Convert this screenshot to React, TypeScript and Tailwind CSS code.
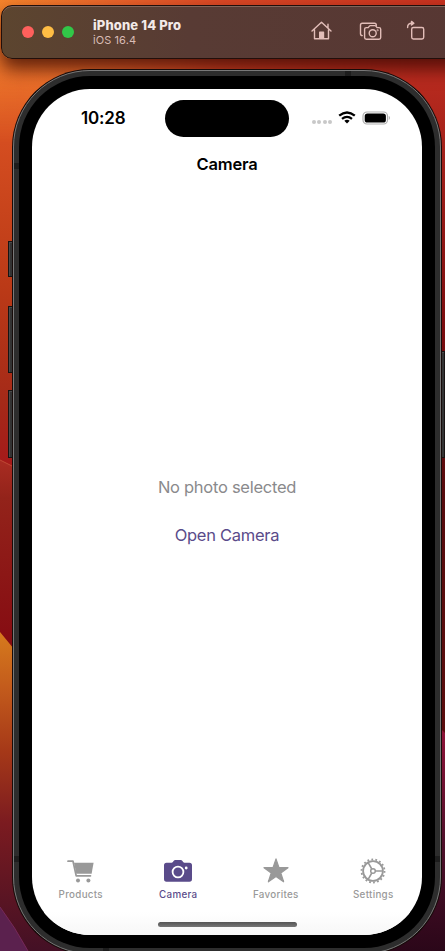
import React from "react";

function Wallpaper() {
  return (
    <svg className="absolute inset-0" width="445" height="951" viewBox="0 0 445 951" aria-hidden="true">
      <defs>
        <linearGradient id="top" x1="0" x2="1" y1="0" y2="0">
          <stop offset="0" stopColor="#f5842c" />
          <stop offset="0.25" stopColor="#e9652b" />
          <stop offset="0.5" stopColor="#da4825" />
          <stop offset="1" stopColor="#c8321f" />
        </linearGradient>
        <linearGradient id="left" gradientUnits="userSpaceOnUse" x1="0" x2="0" y1="0" y2="951">
          <stop offset="0" stopColor="#e9702b" stopOpacity="0" />
          <stop offset="0.07" stopColor="#e66a29" stopOpacity="0.6" />
          <stop offset="0.15" stopColor="#d44d20" />
          <stop offset="0.3" stopColor="#bb3a17" />
          <stop offset="0.42" stopColor="#a52a18" />
          <stop offset="0.5" stopColor="#a5171a" />
        </linearGradient>
        <linearGradient id="ridge" gradientUnits="userSpaceOnUse" x1="0" x2="0" y1="460" y2="650">
          <stop offset="0" stopColor="#a92c22" />
          <stop offset="0.2" stopColor="#93231a" />
          <stop offset="1" stopColor="#850b12" />
        </linearGradient>
        <linearGradient id="amber" gradientUnits="userSpaceOnUse" x1="0" x2="0" y1="630" y2="951">
          <stop offset="0" stopColor="#d77c1d" />
          <stop offset="0.18" stopColor="#c35b1c" />
          <stop offset="0.38" stopColor="#a53818" />
          <stop offset="0.6" stopColor="#7b1b20" />
          <stop offset="1" stopColor="#431025" />
        </linearGradient>
        <linearGradient id="right" gradientUnits="userSpaceOnUse" x1="0" x2="0" y1="50" y2="735">
          <stop offset="0" stopColor="#c02e20" />
          <stop offset="0.15" stopColor="#a3211a" />
          <stop offset="0.4" stopColor="#7c0c0e" />
          <stop offset="0.65" stopColor="#570a0c" />
          <stop offset="1" stopColor="#5a0c0c" />
        </linearGradient>
        <linearGradient id="plum" gradientUnits="userSpaceOnUse" x1="0" x2="0" y1="730" y2="951">
          <stop offset="0" stopColor="#8e1237" />
          <stop offset="0.5" stopColor="#50102b" />
          <stop offset="1" stopColor="#2b0719" />
        </linearGradient>
        <linearGradient id="fadeRight" gradientUnits="userSpaceOnUse" x1="20" x2="160" y1="0" y2="0">
          <stop offset="0" stopColor="#fff" />
          <stop offset="1" stopColor="#000" />
        </linearGradient>
        <linearGradient id="fadeLeft" gradientUnits="userSpaceOnUse" x1="180" x2="420" y1="0" y2="0">
          <stop offset="0" stopColor="#000" />
          <stop offset="1" stopColor="#fff" />
        </linearGradient>
        <mask id="leftMask" maskUnits="userSpaceOnUse" x="0" y="0" width="445" height="951">
          <rect width="445" height="951" fill="url(#fadeRight)" />
        </mask>
        <mask id="rightMask" maskUnits="userSpaceOnUse" x="0" y="0" width="445" height="951">
          <rect width="445" height="951" fill="url(#fadeLeft)" />
        </mask>
      </defs>
      <rect width="445" height="951" fill="url(#top)" />
      <path d="M0 0H160V470H0Z" fill="url(#left)" mask="url(#leftMask)" />
      <path d="M180 50H445V740H180Z" fill="url(#right)" mask="url(#rightMask)" />
      <path d="M0 460L30 475V680H0Z" fill="url(#ridge)" />
      <path d="M0 460L30 475" fill="none" stroke="#bf4a35" />
      <path d="M0 632L32 671H200V951H0Z" fill="url(#amber)" />
      <path d="M300 718H430L445 733V951H300Z" fill="url(#plum)" />
      <path d="M0 907Q15 927 28 951H0Z" fill="#5b214e" />
      <path d="M0 907Q15 927 28 951" fill="none" stroke="#762958" />
    </svg>
  );
}

function TitleBar() {
  return (
    <header className="relative ml-px mt-[5px] flex h-[54px] w-[470px] shrink-0 items-center rounded-[11px] border border-[#210f0b] bg-gradient-to-r from-[#5c452f] via-[#583b34] via-40% to-[#573733] shadow-[inset_0_1px_0_#80655a,0_10px_18px_rgba(50,5,0,0.75)]">
      <div className="ml-5 flex gap-2">
        <span className="size-3 rounded-full bg-[#ff605c]" />
        <span className="size-3 rounded-full bg-[#ffbd44]" />
        <span className="size-3 rounded-full bg-[#31c748]" />
      </div>
      <div className="ml-[19px] w-[218px] whitespace-nowrap pt-px">
        <div className="text-[13px] font-extrabold leading-[15px] tracking-[0.13px] text-[#f3eae8]">iPhone 14 Pro</div>
        <div className="text-[11px] leading-[14px] tracking-[0.08px] text-[#d9bcb5]">iOS 16.4</div>
      </div>
      <svg width="21" height="21" viewBox="0 0 21 21" fill="none" stroke="#e2bdb8" strokeWidth="1.4" strokeLinecap="round" strokeLinejoin="round" className="mb-[3px]" aria-label="Home">
        <path d="M1 11L10.5 2.2L20 11M3.5 9.5V18.7H17.5V9.5M17 8V4.3" />
        <path d="M8.7 18V12.2H12.5V18Z" fill="#e2bdb8" />
      </svg>
      <svg width="24" height="20" viewBox="0 0 24 20" fill="none" stroke="#e2bdb8" strokeWidth="1.4" strokeLinejoin="round" strokeLinecap="round" className="mb-0.5 ml-[27px]" aria-label="Screenshot">
        <path d="M3.3 14.6Q1.5 14.6 1.5 12.8V4Q1.5 2.2 3.3 2.2H15.5Q17.3 2.2 17.3 4V4.5" />
        <path d="M7.3 6.6H9.2L10.4 5.1Q10.8 4.6 11.4 4.6H15.9Q16.5 4.6 16.9 5.1L18.1 6.6H20Q21.7 6.6 21.7 8.3V16.5Q21.7 18.2 20 18.2H7.3Q5.6 18.2 5.6 16.5V8.3Q5.6 6.6 7.3 6.6Z" />
        <circle cx="13.7" cy="12.2" r="3.5" />
        <circle cx="18.6" cy="9.2" r="0.3" />
      </svg>
      <svg width="20" height="21" viewBox="0 0 20 21" fill="none" stroke="#e2bdb8" strokeWidth="1.4" strokeLinejoin="round" strokeLinecap="round" className="ml-[23px] mb-[3px]" aria-label="Rotate">
        <rect x="5.7" y="7.5" width="12" height="11.5" rx="1.7" />
        <path d="M1.6 7.6Q1.5 3.2 6 3.2" />
        <path d="M5.5 1.4L7.9 3.2L5.5 5Z" fill="#e2bdb8" />
      </svg>
    </header>
  );
}

function StatusBar() {
  return (
    <div className="flex h-[58px] pt-[11px]">
      <div className="w-[133px] pl-[49px] pt-[7px] text-[17px] font-semibold leading-[22px] tracking-[-0.15px]">10:28</div>
      <div className="h-[37px] w-[124px] rounded-full bg-black" />
      <div className="flex h-[35px] items-center pl-[23px]">
        <div className="mt-[9px] flex gap-[1.4px]">
          <span className="size-[4px] rounded-full bg-[#c8c8c8]" />
          <span className="size-[4px] rounded-full bg-[#c8c8c8]" />
          <span className="size-[4px] rounded-full bg-[#c8c8c8]" />
          <span className="size-[4px] rounded-full bg-[#c8c8c8]" />
        </div>
        <svg className="ml-[6px]" width="18" height="13" viewBox="0 0 18 13" fill="none" stroke="#000" strokeWidth="2.3">
          <path d="M1.2 4.7Q9 -1.8 16.8 4.7M4 7.9Q9 3.9 14 7.9" />
          <path d="M6.3 9.7Q9 7.8 11.7 9.7L9 12.5Z" fill="#000" stroke="none" />
        </svg>
        <svg className="ml-[5.5px]" width="29" height="14" viewBox="0 0 29 14">
          <rect x="1" y="1" width="24.5" height="12" rx="4" fill="#fff" stroke="#b0b0b0" strokeWidth="1.2" />
          <rect x="2.7" y="2.4" width="21.2" height="9.2" rx="2.7" />
          <path d="M26.8 4.8Q29 7 26.8 9.2Z" fill="#aaa" />
        </svg>
      </div>
    </div>
  );
}

function CartIcon() {
  return (
    <svg width="28" height="26" viewBox="0 0 28 26" fill="#999" aria-hidden="true">
      <path d="M1 3.2H6L9.2 17.8H23.5" fill="none" stroke="#999" strokeWidth="1.7" strokeLinecap="round" strokeLinejoin="round" />
      <path d="M7 4.7H26.6L24.6 15.7H9.3Z" />
      <circle cx="11" cy="22.4" r="2" />
      <circle cx="21.4" cy="22.4" r="2" />
    </svg>
  );
}

function CameraIcon() {
  return (
    <svg width="28" height="26" viewBox="0 0 28 26" fill="#5a4b8a" aria-hidden="true">
      <path d="M2.5 4.8H7.5Q8.4 4.8 9 3.8L9.8 2.7Q10.3 2 11.2 2H16.8Q17.7 2 18.2 2.7L19 3.8Q19.6 4.8 20.5 4.8H25.5Q28 4.8 28 7.3V21Q28 23.7 25.5 23.7H2.5Q0 23.7 0 21V7.3Q0 4.8 2.5 4.8Z" />
      <circle cx="14" cy="14" r="5.4" fill="none" stroke="#fff" strokeWidth="1.8" />
      <circle cx="22.2" cy="10" r="1.4" fill="#fff" />
    </svg>
  );
}

function StarIcon() {
  return (
    <svg width="28" height="26" viewBox="0 0 28 26" fill="#999" stroke="#999" strokeWidth="1.2" strokeLinejoin="round" aria-hidden="true">
      <path d="M14 .9L17 9.7H26L18.8 14.9L21.6 23.8L14 18.4L6.4 23.8L9.2 14.9L2 9.7H11Z" />
    </svg>
  );
}

function GearIcon() {
  return (
    <svg width="28" height="26" viewBox="0 0 28 26" fill="none" stroke="#999" aria-hidden="true">
      <circle cx="14" cy="13" r="11.5" strokeWidth="1.8" strokeDasharray="1.8 2.214" />
      <circle cx="14" cy="13" r="9.9" strokeWidth="1.8" />
      <circle cx="14" cy="13" r="2.3" strokeWidth="1.5" />
      <path d="M16.3 13H24M12.8 11L9 4.4M12.8 15L9 21.6" strokeWidth="1.6" />
    </svg>
  );
}

const tabs = [
  { label: "Products", icon: CartIcon, active: false },
  { label: "Camera", icon: CameraIcon, active: true },
  { label: "Favorites", icon: StarIcon, active: false },
  { label: "Settings", icon: GearIcon, active: false },
];

function Screen() {
  return (
    <div className="flex h-full w-full flex-col overflow-hidden rounded-[58px] bg-white">
      <StatusBar />
      <h1 className="h-[29px] pt-[6px] text-center text-[16.5px] font-semibold leading-[22px] tracking-[-0.2px] text-black">Camera</h1>
      <main className="flex flex-1 flex-col items-center pt-[300px] text-[16.5px] leading-[22px]">
        <p className="tracking-[-0.27px] text-[#8a8a8c]">No photo selected</p>
        <button className="mt-[26px] tracking-[-0.27px] text-[#5a4b8a]">Open Camera</button>
      </main>
      <nav className="grid h-[54px] grid-cols-4">
        {tabs.map(({ label, icon: Icon, active }) => (
          <div key={label} className={active ? "flex flex-col items-center text-[#5a4b8a]" : "flex flex-col items-center text-[#999]"}>
            <Icon />
            <span className="mt-[4px] text-[9.8px] font-medium leading-[13px] tracking-[0.3px]">{label}</span>
          </div>
        ))}
      </nav>
      <div className="flex h-[23px] justify-center bg-gradient-to-b from-white to-[#f7f7f7] pt-[10px]">
        <div className="h-[5px] w-[139px] rounded-full bg-gradient-to-b from-[#555] to-[#777]" />
      </div>
    </div>
  );
}

function Phone() {
  const button = "absolute border border-[#171312] bg-[#333] shadow-[inset_1px_1px_0_#4a4a4a]";
  return (
    <div className="relative ml-[13px] mt-[11px] h-[884px] w-[428px] shrink-0">
      <span className={`${button} -left-[5px] top-[171px] h-[36px] w-[7px]`} />
      <span className={`${button} -left-[5px] top-[236px] h-[67px] w-[7px]`} />
      <span className={`${button} -left-[5px] top-[320px] h-[68px] w-[7px]`} />
      <span className={`${button} -right-[4px] top-[281px] h-[107px] w-[6px]`} />
      <div className="relative h-full w-full rounded-[77px] border border-[#797979] bg-[#2d2d2d] p-[5px] shadow-[0_0_0_1px_#160b09]">
        <span className="absolute left-0 top-[92px] h-[6px] w-[5px] bg-[#1d1d1d]" />
        <span className="absolute left-0 top-[785px] h-[6px] w-[5px] bg-[#1d1d1d]" />
        <span className="absolute right-0 top-[785px] h-[6px] w-[5px] bg-[#1d1d1d]" />
        <span className="absolute left-[331px] top-0 h-[5px] w-[6px] bg-[#1d1d1d]" />
        <span className="absolute bottom-0 left-[89px] h-[5px] w-[6px] bg-[#1d1d1d]" />
        <div className="h-full w-full rounded-[71px] bg-black p-[13px]">
          <Screen />
        </div>
      </div>
    </div>
  );
}

export default function App() {
  return (
    <div className="relative h-[951px] w-[445px] overflow-hidden font-['Inter','Liberation_Sans',sans-serif]">
      <Wallpaper />
      <div className="flex h-full flex-col overflow-hidden">
        <TitleBar />
        <Phone />
      </div>
    </div>
  );
}
